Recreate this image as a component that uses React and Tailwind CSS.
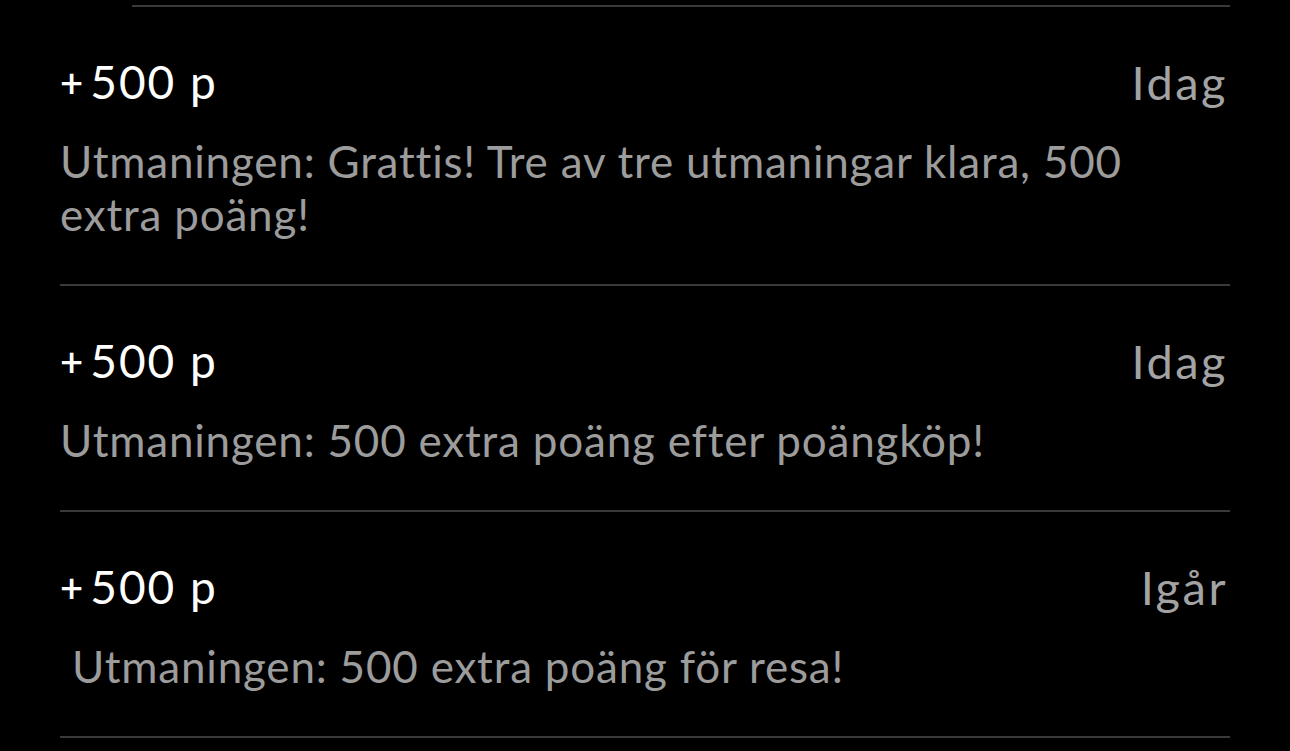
import React from 'react';

const items = [
  {
    points: '500 p',
    when: 'Idag',
    text: 'Utmaningen: Grattis! Tre av tre utmaningar klara, 500 extra poäng!',
  },
  {
    points: '500 p',
    when: 'Idag',
    text: 'Utmaningen: 500 extra poäng efter poängköp!',
  },
  {
    points: '500 p',
    when: 'Igår',
    text: '\u00a0Utmaningen: 500 extra poäng för resa!',
  },
];

const Row = ({ item }) => (
  <div className="pt-[47px] pb-[43px] border-b-2 border-[#3a3a3a]">
    <div className="flex items-center justify-between h-[56px]">
      <div className="flex items-center text-white">
        <span className="text-[40px] leading-[56px] font-semibold mr-[7px]">+</span>
        <span className="text-[46px] leading-[56px] tracking-[2px]">{item.points}</span>
      </div>
      <span className="text-[#a3a3a3] text-[47px] leading-[56px] tracking-[2.5px] pr-[2px]">{item.when}</span>
    </div>
    <p className="mt-[25px] text-[#9c9c9c] text-[44px] leading-[53px] tracking-[0.8px] pr-[40px]">{item.text}</p>
  </div>
);

export default function App() {
  return (
    <div
      className="w-[1290px] h-[751px] bg-black overflow-hidden"
      style={{ fontFamily: 'Lato, "Noto Sans", sans-serif' }}
    >
      <div className="pt-[5px] pl-[132px] pr-[60px]">
        <div className="h-[2px] bg-[#3a3a3a]" />
      </div>
      <div className="px-[60px]">
        {items.map((item, i) => (
          <Row key={i} item={item} />
        ))}
      </div>
    </div>
  );
}
